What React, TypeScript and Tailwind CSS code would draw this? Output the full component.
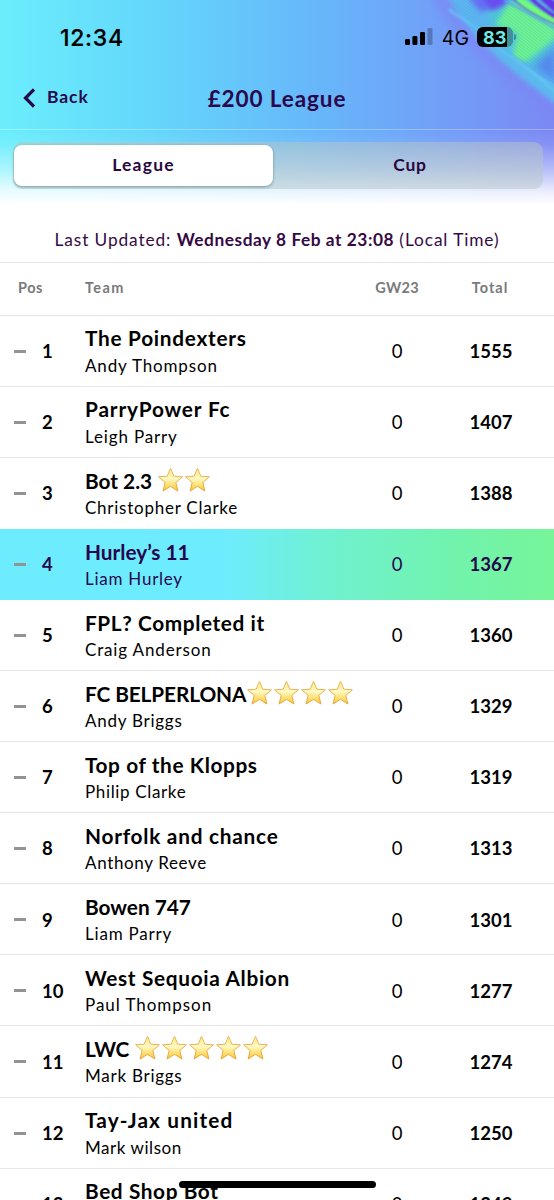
import React from "react";

type Row = { pos: number; team: string; tracking: string; manager: string; mTracking: string; total: number; stars?: number; gap?: string };

const rows: Row[] = [
  { pos: 1, team: "The Poindexters", tracking: "tracking-[0.72px]", manager: "Andy Thompson", mTracking: "tracking-[0.85px]", total: 1555 },
  { pos: 2, team: "ParryPower Fc", tracking: "tracking-[0.85px]", manager: "Leigh Parry", mTracking: "tracking-[0.85px]", total: 1407 },
  { pos: 3, team: "Bot 2.3", tracking: "tracking-[0px]", manager: "Christopher Clarke", mTracking: "tracking-[0.75px]", total: 1388, stars: 2, gap: "ml-[5px]" },
  { pos: 4, team: "Hurley’s 11", tracking: "tracking-[0px]", manager: "Liam Hurley", mTracking: "tracking-[0.75px]", total: 1367 },
  { pos: 5, team: "FPL? Completed it", tracking: "tracking-[0.6px]", manager: "Craig Anderson", mTracking: "tracking-[0.85px]", total: 1360 },
  { pos: 6, team: "FC BELPERLONA", tracking: "tracking-[-0.1px]", manager: "Andy Briggs", mTracking: "tracking-[0.75px]", total: 1329, stars: 4, gap: "ml-0" },
  { pos: 7, team: "Top of the Klopps", tracking: "tracking-[0.6px]", manager: "Philip Clarke", mTracking: "tracking-[0.65px]", total: 1319 },
  { pos: 8, team: "Norfolk and chance", tracking: "tracking-[0.75px]", manager: "Anthony Reeve", mTracking: "tracking-[0.65px]", total: 1313 },
  { pos: 9, team: "Bowen 747", tracking: "tracking-[0px]", manager: "Liam Parry", mTracking: "tracking-[0.8px]", total: 1301 },
  { pos: 10, team: "West Sequoia Albion", tracking: "tracking-[0.67px]", manager: "Paul Thompson", mTracking: "tracking-[0.95px]", total: 1277 },
  { pos: 11, team: "LWC", tracking: "tracking-[-0.2px]", manager: "Mark Briggs", mTracking: "tracking-[0.75px]", total: 1274, stars: 5, gap: "ml-[5px]" },
  { pos: 12, team: "Tay-Jax united", tracking: "tracking-[1.15px]", manager: "Mark wilson", mTracking: "tracking-[0.55px]", total: 1250 },
  { pos: 13, team: "Bed Shop Bot", tracking: "tracking-[0.6px]", manager: "", mTracking: "tracking-[0.4px]", total: 1249 },
];

function Star() {
  return (
    <svg width="27" height="26" viewBox="0 0 27 26" className="shrink-0">
      <path d="M13.5 1.2 L16.8 9.2 L25.4 9.8 L18.8 15.4 L20.9 24 L13.5 19.3 L6.1 24 L8.2 15.4 L1.6 9.8 L10.2 9.2 Z" fill="url(#star)" stroke="url(#starEdge)" strokeWidth="1" strokeLinejoin="round" />
    </svg>
  );
}

function Artwork() {
  return (
    <svg width="170" height="150" viewBox="0 0 170 150" className="absolute right-0 top-0">
      <defs>
        <filter id="soft" x="-30%" y="-30%" width="160%" height="160%"><feGaussianBlur stdDeviation="4" /></filter>
        <filter id="mid" x="-20%" y="-20%" width="140%" height="140%"><feGaussianBlur stdDeviation="2.5" /></filter>
        <filter id="fine" x="-20%" y="-20%" width="140%" height="140%"><feGaussianBlur stdDeviation="0.8" /></filter>
        <pattern id="hatch" width="2.4" height="2.4" patternUnits="userSpaceOnUse" patternTransform="rotate(38)">
          <path d="M0 1H2.4" stroke="#4c72f0" strokeWidth="0.7" opacity="0.28" />
        </pattern>
        <clipPath id="wing"><path d="M66 0 C86 22 120 55 170 84 V0Z" /></clipPath>
      </defs>
      <path d="M44 -8 C64 34 112 75 175 122 V-8Z" fill="#7b86f5" opacity=".6" filter="url(#soft)" />
      <path d="M62 -8 C80 28 112 62 178 108 V-8Z" fill="#5bb9ee" filter="url(#mid)" />
      <g clipPath="url(#wing)">
        <path d="M96 0 L108 20 L105 34 L138 64 L170 70 V0Z" fill="#4fcbd8" filter="url(#soft)" />
        <path d="M80 -8 L96 12 L122 6 L125 -8Z" fill="#6670f4" filter="url(#mid)" />
        <path d="M94 -8 L108 10 L122 2 L120 -8Z" fill="#6a48f0" filter="url(#mid)" />
        <path d="M150 66 L172 46 V84Z" fill="#5488ef" filter="url(#soft)" />
        <path d="M124 4 L112 24 L134 34 L128 58 L140 63 L172 38 V18 L140 0Z" fill="#6cf88c" filter="url(#mid)" />
        <rect width="170" height="120" fill="url(#hatch)" />
        <path d="M120 0 Q146 14 172 29" fill="none" stroke="#56a3ee" strokeWidth="2" filter="url(#fine)" />
        <path d="M128 -2 Q146 14 172 24" fill="none" stroke="#5e63e4" strokeWidth="2" filter="url(#fine)" />
        <path d="M134 -2 Q148 10 172 21" fill="none" stroke="#6ffc77" strokeWidth="5" filter="url(#fine)" />
        <path d="M145 -4 Q157 9 174 18" fill="none" stroke="#6434e4" strokeWidth="4" filter="url(#fine)" />
        <path d="M158 -4 L174 10" fill="none" stroke="#6434e4" strokeWidth="8" filter="url(#fine)" />
      </g>
      <path d="M65 9 C72 17 86 20 99 33 C120 54 145 66 170 91" fill="none" stroke="#65c9f5" strokeWidth="3" opacity=".7" filter="url(#fine)" />
      <path d="M72 6 C84 22 108 44 170 82" fill="none" stroke="#4fb0ee" strokeWidth="2" opacity=".6" filter="url(#fine)" />
    </svg>
  );
}

export default function App() {
  return (
    <div className="relative flex h-[1200px] w-[554px] flex-col overflow-hidden bg-white font-['Lato',sans-serif] text-black">
      <svg width="0" height="0" className="absolute">
        <defs>
          <linearGradient id="star" x1="0" y1="0" x2="0" y2="1"><stop stopColor="#ffe777" /><stop offset=".45" stopColor="#fff9c4" /><stop offset="1" stopColor="#ffc928" /></linearGradient>
          <linearGradient id="starEdge" x1="0" y1="0" x2="0" y2="1"><stop stopColor="#e7bd65" /><stop offset="1" stopColor="#e6a23e" /></linearGradient>
        </defs>
      </svg>
      <header className="relative flex h-[210px] shrink-0 flex-col bg-[linear-gradient(90deg,#6beefc_0%,#64d6fb_28%,#67b7fa_57%,#739bf7_83%,#7c88f4_100%)]">
        <Artwork />
        <div className="absolute inset-x-0 bottom-0 h-[80px] bg-[linear-gradient(180deg,rgba(255,255,255,0)_0%,rgba(255,255,255,0.08)_18%,rgba(255,255,255,0.45)_50%,rgba(255,255,255,0.85)_77%,#fff_94%)]" />
        <div className="relative flex h-[74px] items-center pl-[60px] pr-[38px] font-['Inter',sans-serif]">
          <span className="pt-[2px] text-[23px] font-medium tracking-[0.7px] [-webkit-text-stroke:0.2px_black]">12:34</span>
          <svg width="28" height="18" viewBox="0 0 28 18" className="ml-auto">
            <rect x="0" y="11" width="5" height="6" rx="1.3" /><rect x="7.4" y="8" width="5" height="9" rx="1.3" /><rect x="15" y="4" width="5" height="13" rx="1.3" /><rect x="22.5" y="0" width="5" height="17" rx="1.3" opacity=".25" />
          </svg>
          <span className="ml-[9px] pt-[3px] text-[19.5px] font-normal">4G</span>
          <div className="ml-[8px] flex h-5 w-9 items-center rounded-[6px] bg-[linear-gradient(90deg,#000_83%,#3f8f9c_83%)] pl-[6px] text-[18px] font-bold text-[#6fe8e4]">83</div>
          <div className="ml-px h-[6px] w-[2px] rounded-r bg-[#368f9c]" />
        </div>
        <div className="relative grid h-[56px] grid-cols-[1fr_auto_1fr] items-center border-b border-white/30 pb-[6px] text-[#29084b]">
          <div className="flex items-center pb-[2px] pl-[22px]">
            <svg width="13" height="20" viewBox="0 0 13 20"><path d="M12 1.5 L3.5 10 L12 18.5" fill="none" stroke="currentColor" strokeWidth="3.2" /></svg>
            <span className="ml-[12px] text-[17.5px] font-bold tracking-[0.9px]">Back</span>
          </div>
          <h1 className="text-[22.5px] font-bold tracking-[0.9px]">£200 League</h1>
        </div>
        <div className="relative ml-[13px] mr-[11px] mt-[12px] flex h-[47px] rounded-[9px] bg-[#b8c6c5]/50 pt-[3px] text-[17.5px] font-bold tracking-[1.2px] text-[#29083d]">
          <div className="ml-px flex h-[41px] w-[259px] items-center justify-center rounded-[8px] bg-white shadow-[0_1px_3px_rgba(0,50,60,0.4)]">League</div>
          <div className="flex h-[41px] flex-1 items-center justify-center pl-[4px] tracking-[0.8px]">Cup</div>
        </div>
      </header>
      <p className="flex h-[53px] shrink-0 items-center justify-center whitespace-pre border-b border-[#e7e7ea] pt-[8px] text-[17.3px] tracking-[0.9px] text-[#350943]">Last Updated: <b className="tracking-[0.55px]">Wednesday 8 Feb at 23:08</b> (Local Time)</p>
      <div className="grid h-[53px] shrink-0 grid-cols-[85px_262px_100px_85px] items-center border-b border-[#e7e7ea] pb-[2px] text-[14.5px] font-bold tracking-[0.3px] text-[#79797b]">
        <span className="pl-[18px] tracking-[0.5px]">Pos</span><span className="tracking-[1.4px]">Team</span><span className="text-center">GW23</span><span className="pl-px text-center tracking-[1px]">Total</span>
      </div>
      {rows.map((r) => (
        <div key={r.pos} className={`grid h-[71.06px] shrink-0 grid-cols-[42px_43px_262px_100px_88px] items-center border-b text-[18.5px] ${r.pos === 4 ? "border-transparent bg-[linear-gradient(90deg,#6decff_0%,#6decff_40%,#70f1d1_59%,#71f3ad_82%,#76f599_100%)] bg-origin-border text-[#25084b]" : r.pos === 3 ? "border-transparent" : "border-[#e7e7ea]"}`}>
          <span className="ml-[14px] mt-px h-[3px] w-[12px] bg-[#939390]" />
          <b className="pt-[2px]">{r.pos}</b>
          <div className="pt-px">
            <div className="flex h-[28px] items-center whitespace-nowrap text-[20.8px] font-bold"><span className={r.tracking}>{r.team}</span>{r.stars && <span className={`flex ${r.gap}`}>{Array.from({ length: r.stars }, (_, i) => <Star key={i} />)}</span>}</div>
            <div className={`h-[27px] whitespace-nowrap text-[17px] leading-[27px] ${r.mTracking}`}>{r.manager}</div>
          </div>
          <span className="pt-[2px] text-center">0</span><b className="pt-[2px] text-center">{r.total}</b>
        </div>
      ))}
      <div className="absolute bottom-[12px] left-[179px] h-[7px] w-[197px] rounded-full bg-black" />
    </div>
  );
}
